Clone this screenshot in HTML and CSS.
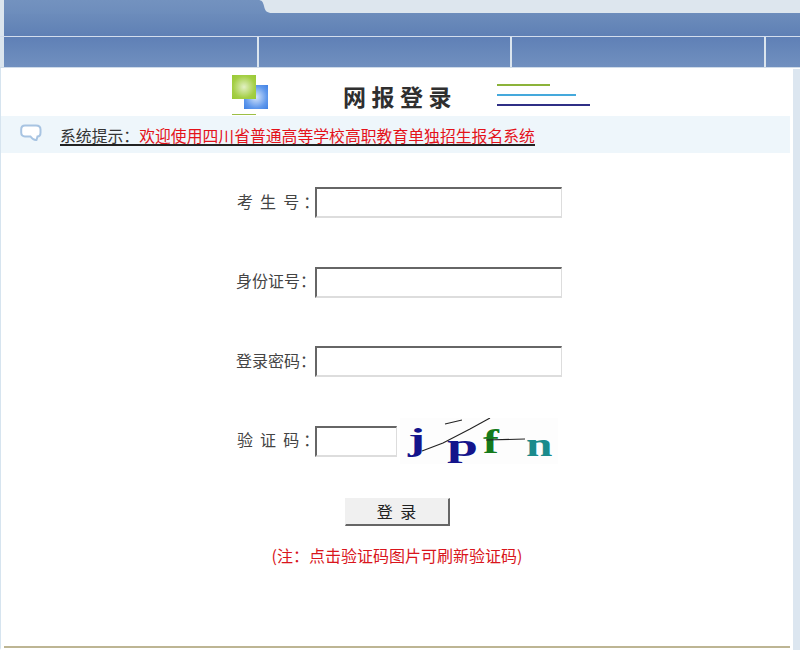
FILE: index.html
```html
<!DOCTYPE html>
<html lang="zh-CN">
<head>
<meta charset="utf-8">
<title>网报登录</title>
<link rel="stylesheet" href="styles.css">
</head>
<body>
<div class="page">
  <header class="top">
    <div class="top-cut"><div class="tab-rest"></div></div>
    <div class="top-band"></div>
  </header>
  <nav class="nav">
    <div class="nav-cell"></div>
    <div class="nav-cell"></div>
    <div class="nav-cell"></div>
    <div class="nav-cell nav-last"></div>
  </nav>
  <div class="body-wrap">
    <main class="main">
      <section class="brand">
        <div class="logo">
          <span class="sq-blue"></span>
          <span class="sq-green"></span>
          <span class="logo-line"></span>
        </div>
        <h1 class="title">网报登录</h1>
        <div class="bars">
          <span class="bar bar-g"></span>
          <span class="bar bar-b"></span>
          <span class="bar bar-n"></span>
        </div>
      </section>
      <section class="notice">
        <svg class="bubble" width="22" height="18" viewBox="0 0 22 18" aria-hidden="true">
          <path d="M5 1.5H16C18.5 1.5 20.5 3 20.5 5.5V8.5C20.5 11 19 12.5 17.5 12.5L16.5 16C14.5 16.5 12 14.5 10.5 12.5H5C2.5 12.5 1.2 11 1.2 8.5V5.5C1.2 3 2.5 1.5 5 1.5Z" fill="#fff" stroke="#a8c4e2" stroke-width="2"/>
        </svg>
        <a class="notice-text" href="#">系统提示：<span class="notice-red">欢迎使用四川省普通高等学校高职教育单独招生报名系统</span></a>
      </section>
      <form class="form">
        <div class="row"><label class="label label-spaced">考 生 号<span class="colon">：</span></label><input class="field" type="text"></div>
        <div class="row"><label class="label">身份证号：</label><input class="field" type="text"></div>
        <div class="row"><label class="label">登录密码：</label><input class="field" type="password"></div>
        <div class="row">
          <label class="label label-spaced">验 证 码<span class="colon">：</span></label><input class="field field-code" type="text">
          <svg class="captcha" width="158" height="46" viewBox="0 0 158 46">
            <rect width="158" height="46" fill="#fdfdfd"/>
            <text transform="translate(8 32) scale(1.6 1)" class="cap cap-j">j</text>
            <text transform="translate(47 38) scale(1.8 1)" class="cap cap-p">p</text>
            <text transform="translate(83 35) scale(1.4 1)" class="cap cap-f">f</text>
            <text transform="translate(126 38) scale(1.4 1)" class="cap cap-n">n</text>
            <path d="M22 33L43 25L70 11L90 0M45 6L62 2M86 22L125 21" fill="none" stroke="#222" stroke-width="1.1"/>
          </svg>
        </div>
        <div class="submit-row"><button class="submit" type="button">登 录</button></div>
        <p class="hint">(注：点击验证码图片可刷新验证码)</p>
      </form>
    </main>
    <aside class="side"></aside>
  </div>
</div>
</body>
</html>
```
FILE: styles.css
```css
* { box-sizing: border-box; }
html, body { margin: 0; padding: 0; background: #fff; }
body { font-family: "Liberation Sans", "Noto Sans CJK SC", sans-serif; font-size: 16px; }
.page { width: 800px; height: 650px; overflow: hidden; display: flex; flex-direction: column; }

.top { height: 37px; background: #dbe5ee; padding-left: 4px; border-bottom: 1px solid #d3dded; flex: none; }
.top-cut { position: relative; height: 14px; background: linear-gradient(#7392bf, #6d8dbc); }
.tab-rest {
  position: absolute; left: 254px; top: 0; width: 542px; height: 14px;
  background: #dde6ee;
  clip-path: path("M0 0C4 0 5 2 6 6C7 11 9 13 14 13L542 13L542 0Z");
}
.top-band { height: 22px; background: linear-gradient(#6c8cbb, #5f80b5); }

.nav { display: flex; height: 31px; background: #dbe5ee; padding-left: 4px; gap: 2px; flex: none; border-bottom: 1px solid #cfdbe9; }
.nav-cell { width: 253px; background: linear-gradient(#5f80b6, #7190bf); }
.nav-cell:nth-child(2) { width: 251px; }
.nav-cell:nth-child(3) { width: 252px; }
.nav-last { flex: 1; }

.body-wrap { display: flex; flex: 1; min-height: 0; }
.main { width: 793px; border-left: 1px solid #d6e4ef; background: #fff; display: flex; flex-direction: column; border-bottom: 2px solid #fff; position: relative; }
.main::after { content: ""; position: absolute; left: 3px; width: 786px; bottom: 0; height: 2px; background: #bdb593; }
.side { flex: 1; margin-top: 1px; background: #dce6f0; }

.brand { height: 48px; display: flex; flex: none; padding-left: 231px; }
.logo { position: relative; width: 37px; height: 48px; flex: none; }
.sq-green, .sq-blue { position: absolute; width: 24px; height: 24px; }
.sq-green { left: 0; top: 7px; background: radial-gradient(circle, #e2f0c4 0, #a4cf45 65%, #98c934 100%); }
.sq-blue { left: 12px; top: 17px; background: radial-gradient(circle, #d5e4fa 0, #5f98ec 65%, #3f80e4 100%); }
.logo-line { position: absolute; left: 0; top: 46px; width: 24px; height: 1px; background: #9dbf45; }
.title { margin: 12px 0 0 74px; width: 154px; height: 33px; font-size: 23px; line-height: 33px; font-weight: 700; letter-spacing: 5.5px; color: #2f2f2f; font-family: "Noto Sans CJK SC", sans-serif; }
.bars { display: flex; flex-direction: column; align-items: flex-start; padding-top: 16px; gap: 8px; }
.bar { display: block; height: 2px; }
.bar-g { width: 53px; background: #8cb33a; }
.bar-b { width: 79px; background: #45a9dc; }
.bar-n { width: 93px; background: #2f2f86; }

.notice { height: 37px; width: 789px; background: #eef6fb; display: flex; align-items: center; padding-left: 19px; flex: none; }
.bubble { flex: none; margin-top: -4px; }
.notice-text { margin-left: 18px; margin-top: 3px; font-family: "Noto Sans CJK SC", sans-serif; font-size: 15.84px; line-height: 18px; color: #333; text-decoration: none; border-bottom: 2px solid #222; height: 19px; }
.notice-red { color: #e4121a; }

.form { display: flex; flex-direction: column; padding-top: 34px; }
.row { display: flex; align-items: center; height: 31px; margin-left: 235px; margin-bottom: 48.67px; }
.label { width: 79px; flex: none; margin-bottom: 4px; font-family: "Noto Sans CJK SC", sans-serif; font-size: 16px; color: #444; white-space: nowrap; }
.label-spaced { padding-left: 1px; word-spacing: 3.5px; }
.colon { margin-left: 4px; }
.field { width: 247px; height: 31px; background: #fff; border-style: solid; border-width: 2px 1px 2px 2px; border-color: #666 #ddd #ddd #666; padding: 0; margin: 0; outline: none; flex: none; }
.field-code { width: 82px; }
.captcha { flex: none; margin: -8px 0 -8px 3px; }
.cap { font-family: "Liberation Serif", serif; font-weight: 700; }
.cap-j { font-size: 32px; fill: #14148c; }
.cap-p { font-size: 31px; fill: #14148c; }
.cap-f { font-size: 34px; fill: #157a1b; }
.cap-n { font-size: 34px; fill: #1a8b8c; }

.submit-row { display: flex; justify-content: center; margin-top: -8px; }
.submit { width: 105px; height: 28px; padding: 0; background: #f0f0f0; border-style: solid; border-width: 1px 2px 2px 1px; border-color: #f0f0f0 #666 #666 #f0f0f0; font-family: "Noto Sans CJK SC", sans-serif; font-size: 16px; color: #222; word-spacing: 4px; }
.hint { margin: 18px 0 0; text-align: center; font-family: "Noto Sans CJK SC", sans-serif; font-size: 16px; line-height: 22px; color: #d9151c; }
```
